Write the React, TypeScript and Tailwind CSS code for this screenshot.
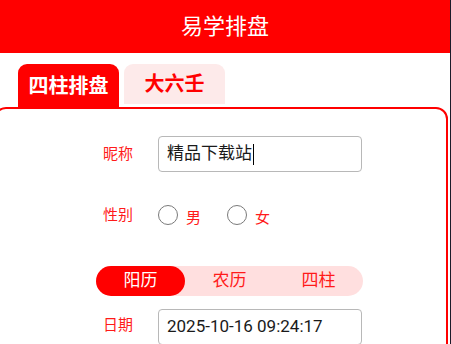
import React from 'react';

const font = { fontFamily: 'Roboto, "Noto Sans CJK SC", sans-serif' };

const FieldBox: React.FC<{ children: React.ReactNode }> = ({ children }) => (
  <div className="flex items-center w-[204px] h-[36px] border border-[#b8b8b8] rounded-[4px] px-[8px] text-[17px] text-[#1a1a1a] bg-white">
    {children}
  </div>
);

const Radio: React.FC<{ label: string }> = ({ label }) => (
  <div className="flex items-center gap-[8px]">
    <span className="w-[20px] h-[20px] rounded-full border-[1.5px] border-[#7a7a7a] bg-white" />
    <span className="text-[15px] text-[#ff1a1a] mt-[7px]">{label}</span>
  </div>
);

export default function App() {
  const modes = ['阳历', '农历', '四柱'];
  return (
    <div className="flex w-[451px] h-[344px] overflow-hidden bg-white" style={font}>
      <div className="w-[450px] flex flex-col">
        <div className="h-[53px] shrink-0 bg-[#ff0000] flex items-center justify-center text-white text-[22px]">
          易学排盘
        </div>
        <div className="flex items-end gap-[5px] pl-[18px] mt-[11px] shrink-0">
          <div className="w-[101px] h-[43px] bg-[#ff0000] rounded-t-[9px] flex items-center justify-center text-white text-[20px] font-bold">
            四柱排盘
          </div>
          <div className="w-[101px] h-[40px] mb-[3px] bg-[#fdeaea] rounded-t-[9px] flex items-center justify-center text-[#ff0000] text-[20px] font-bold">
            大六壬
          </div>
        </div>
        <div className="-ml-[6px] mr-[2px] h-[320px] shrink-0 border-2 border-[#ff0000] rounded-[12px] pl-[100px] pt-[27px]">
          <div className="flex items-center">
            <span className="w-[62px] pl-[7px] text-[15px] text-[#ff1a1a]">昵称</span>
            <FieldBox>
              精品下载站
              <span className="w-px h-[21px] bg-black ml-px" />
            </FieldBox>
          </div>
          <div className="flex items-center h-[36px] mt-[25px]">
            <span className="w-[62px] pl-[7px] text-[15px] text-[#ff1a1a]">性别</span>
            <div className="flex items-center gap-[26px]">
              <Radio label="男" />
              <Radio label="女" />
            </div>
          </div>
          <div className="flex w-[267px] h-[30px] mt-[33px] rounded-full bg-[#ffdfdf]">
            {modes.map((m, i) => (
              <div
                key={m}
                className={
                  i === 0
                    ? 'flex-1 rounded-full bg-[#ff0000] text-white text-[17px] flex items-center justify-center'
                    : 'flex-1 rounded-full text-[#ff1a1a] text-[17px] flex items-center justify-center'
                }
              >
                {m}
              </div>
            ))}
          </div>
          <div className="flex items-center mt-[13px]">
            <span className="w-[62px] pl-[7px] text-[15px] text-[#ff1a1a] -mt-[3px]">日期</span>
            <FieldBox>2025-10-16 09:24:17</FieldBox>
          </div>
        </div>
      </div>
      <div className="w-px bg-[#1c1c2a]" />
    </div>
  );
}
